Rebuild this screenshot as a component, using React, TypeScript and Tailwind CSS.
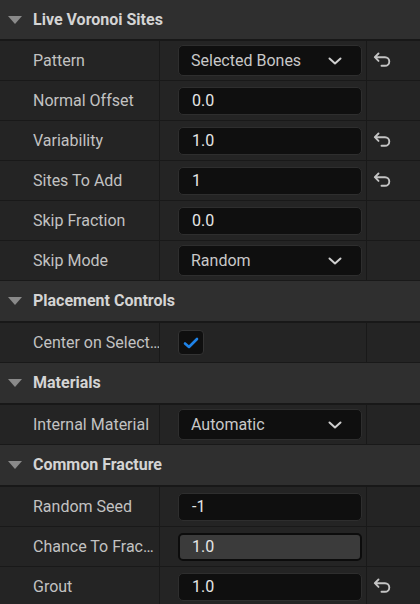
import type { ReactNode } from "react";

// Unreal-style details panel: collapsible categories with label / value / reset columns.

type Row =
  | { kind: "combo"; label: string; value: string; reset?: boolean }
  | { kind: "num"; label: string; value: string; reset?: boolean; active?: boolean }
  | { kind: "check"; label: string };

type Section = { title: string; rows: Row[] };

const sections: Section[] = [
  {
    title: "Live Voronoi Sites",
    rows: [
      { kind: "combo", label: "Pattern", value: "Selected Bones", reset: true },
      { kind: "num", label: "Normal Offset", value: "0.0" },
      { kind: "num", label: "Variability", value: "1.0", reset: true },
      { kind: "num", label: "Sites To Add", value: "1", reset: true },
      { kind: "num", label: "Skip Fraction", value: "0.0" },
      { kind: "combo", label: "Skip Mode", value: "Random" },
    ],
  },
  {
    title: "Placement Controls",
    rows: [{ kind: "check", label: "Center on Select…" }],
  },
  {
    title: "Materials",
    rows: [{ kind: "combo", label: "Internal Material", value: "Automatic" }],
  },
  {
    title: "Common Fracture",
    rows: [
      { kind: "num", label: "Random Seed", value: "-1" },
      { kind: "num", label: "Chance To Frac…", value: "1.0", active: true },
      { kind: "num", label: "Grout", value: "1.0", reset: true },
    ],
  },
];

function Chevron() {
  return (
    <svg width="14" height="8" viewBox="0 0 14 8" fill="none">
      <path d="M1.5 1.5 L7 6.5 L12.5 1.5" stroke="#cfcfcf" strokeWidth="2" strokeLinecap="round" strokeLinejoin="round" />
    </svg>
  );
}

function ResetArrow() {
  return (
    <svg width="19" height="17" viewBox="0 0 19 17" fill="none">
      <path
        d="M5.5 1.5 L1.8 5.2 L5.5 8.9 M2 5.2 H12 a4.3 4.3 0 0 1 0 8.6 H8.5"
        stroke="#c4c4c4"
        strokeWidth="1.9"
        strokeLinecap="round"
        strokeLinejoin="round"
      />
    </svg>
  );
}

function Caret() {
  return (
    <svg width="14" height="8" viewBox="0 0 14 8">
      <path d="M0 0 H14 L7 8 Z" fill="#8a8a8a" />
    </svg>
  );
}

function Value({ row }: { row: Row }) {
  if (row.kind === "check") {
    return (
      <div className="flex h-[25px] w-[26px] items-center justify-center rounded-[4px] border border-[#333] bg-[#0f0f0f]">
        <svg width="16" height="12" viewBox="0 0 16 12" fill="none">
          <path d="M2 6.5 L6 10 L14 2" stroke="#1f83e8" strokeWidth="2.6" strokeLinecap="round" strokeLinejoin="round" />
        </svg>
      </div>
    );
  }
  if (row.kind === "combo") {
    return (
      <div className="flex h-[31px] w-[184px] items-center justify-between rounded-[5px] border border-[#2e2e2e] bg-[#0f0f0f] pl-[12px] pr-[19px] text-[16px] text-[#c8c8c8]">
        <span>{row.value}</span>
        <Chevron />
      </div>
    );
  }
  return (
    <div
      className={
        row.active
          ? "flex h-[28px] w-[184px] items-center rounded-[5px] border-2 border-[#0c0c0c] bg-[#3b3b3b] pl-[12px] text-[16px] text-[#e6e6e6]"
          : "flex h-[28px] w-[184px] items-center rounded-[5px] border border-[#2e2e2e] bg-[#0f0f0f] pl-[13px] text-[16px] text-[#e6e6e6]"
      }
    >
      {row.value}
    </div>
  );
}

function PropRow({ row }: { row: Row }) {
  const reset = row.kind !== "check" && row.reset;
  return (
    <div className="flex h-[40px] border-b border-[#191919] bg-[#242424]">
      <div className="flex w-[160px] shrink-0 items-center border-r border-[#191919] pl-[33px] text-[16px] text-[#c2c2c2] whitespace-nowrap overflow-hidden">
        {row.label}
      </div>
      <div className="flex w-[207px] shrink-0 items-center border-r border-[#191919] pl-[18px]">
        <Value row={row} />
      </div>
      <div className="flex flex-1 items-center pl-[6px]">{reset && <ResetArrow />}</div>
    </div>
  );
}

function Category({ section, first }: { section: Section; first: boolean }): ReactNode {
  return (
    <div>
      <div
        className={
          first
            ? "flex h-[41px] items-center gap-[11px] border-b-2 border-[#181818] bg-[#2f2f2f] pl-[8px]"
            : "flex h-[42px] items-center gap-[11px] border-b-2 border-[#181818] bg-[#2f2f2f] pl-[8px]"
        }
      >
        <Caret />
        <span className="text-[16px] font-bold text-[#d4d4d4]">{section.title}</span>
      </div>
      {section.rows.map((r) => (
        <PropRow key={r.label} row={r} />
      ))}
    </div>
  );
}

export default function App() {
  return (
    <div
      className="h-[604px] w-[420px] overflow-hidden bg-[#242424]"
      style={{ fontFamily: "Roboto, 'Noto Sans', sans-serif" }}
    >
      {sections.map((s, i) => (
        <Category key={s.title} section={s} first={i === 0} />
      ))}
    </div>
  );
}
